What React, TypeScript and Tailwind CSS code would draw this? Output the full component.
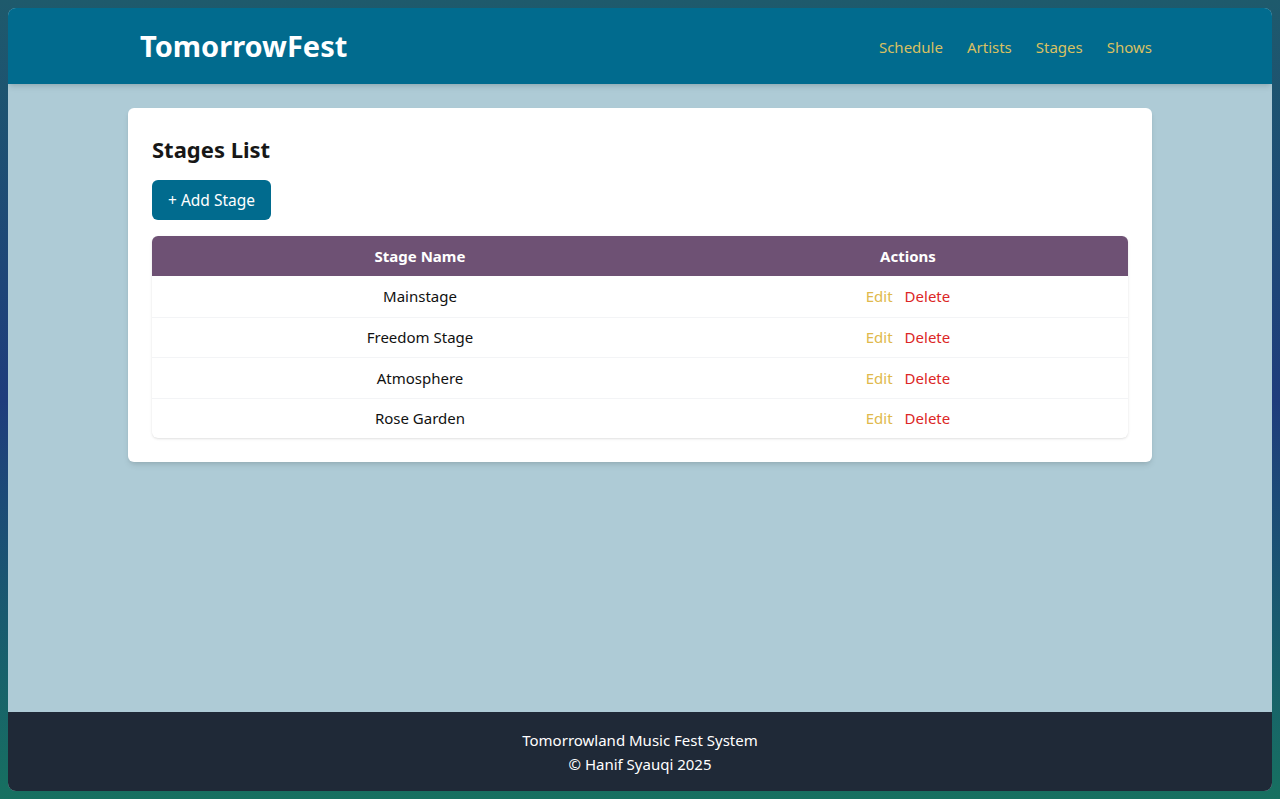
const stages = ['Mainstage', 'Freedom Stage', 'Atmosphere', 'Rose Garden'];

const navLinks = ['Schedule', 'Artists', 'Stages', 'Shows'];

export default function App() {
  return (
    <div
      className="h-[799px] w-full bg-linear-to-b from-[#1e5a6c] via-[#1f3c7c] to-[#177060] p-2"
      style={{ fontFamily: '"Noto Sans", "Open Sans", sans-serif' }}
    >
      <div className="flex h-full flex-col overflow-hidden rounded-lg bg-[#aecbd6]">
        <header className="relative z-10 h-[76px] shrink-0 bg-[#016b8e] shadow-md">
          <div className="mx-auto flex h-full max-w-5xl items-center justify-between">
            <h1 className="pl-3 text-[29px] font-bold text-white">TomorrowFest</h1>
            <nav className="flex gap-6 pt-0.5 text-[15px] text-[#d9c062]">
              {navLinks.map((link) => (
                <a key={link} href="#">
                  {link}
                </a>
              ))}
            </nav>
          </div>
        </header>

        <main className="flex-1 py-6">
          <div className="mx-auto max-w-5xl rounded-md bg-white p-6 shadow-md">
            <h2 className="text-[22px] leading-[34px] font-bold text-[#171717]">Stages List</h2>
            <button className="mt-[14px] h-10 rounded-md bg-[#016b8e] px-4 pt-0.5 text-[15.5px] text-white">
              + Add Stage
            </button>
            <div className="mt-4 overflow-hidden rounded-md shadow">
              <div className="grid h-10 grid-cols-[536px_1fr] items-center bg-[#6e5174] text-[15px] font-bold text-white">
                <div className="text-center">Stage Name</div>
                <div className="text-center">Actions</div>
              </div>
              {stages.map((stage, i) => (
                <div
                  key={stage}
                  className={`grid h-[40.5px] grid-cols-[536px_1fr] items-center text-[15px] text-[#111] ${
                    i > 0 ? 'border-t border-gray-100' : ''
                  }`}
                >
                  <div className="text-center">{stage}</div>
                  <div className="flex justify-center gap-3">
                    <a href="#" className="text-[#e0b94c]">
                      Edit
                    </a>
                    <a href="#" className="text-[#dc2626]">
                      Delete
                    </a>
                  </div>
                </div>
              ))}
            </div>
          </div>
        </main>

        <footer className="h-[79px] shrink-0 bg-[#1f2937] py-4 text-center text-[15px] leading-6 text-white">
          <p>Tomorrowland Music Fest System</p>
          <p>© Hanif Syauqi 2025</p>
        </footer>
      </div>
    </div>
  );
}
